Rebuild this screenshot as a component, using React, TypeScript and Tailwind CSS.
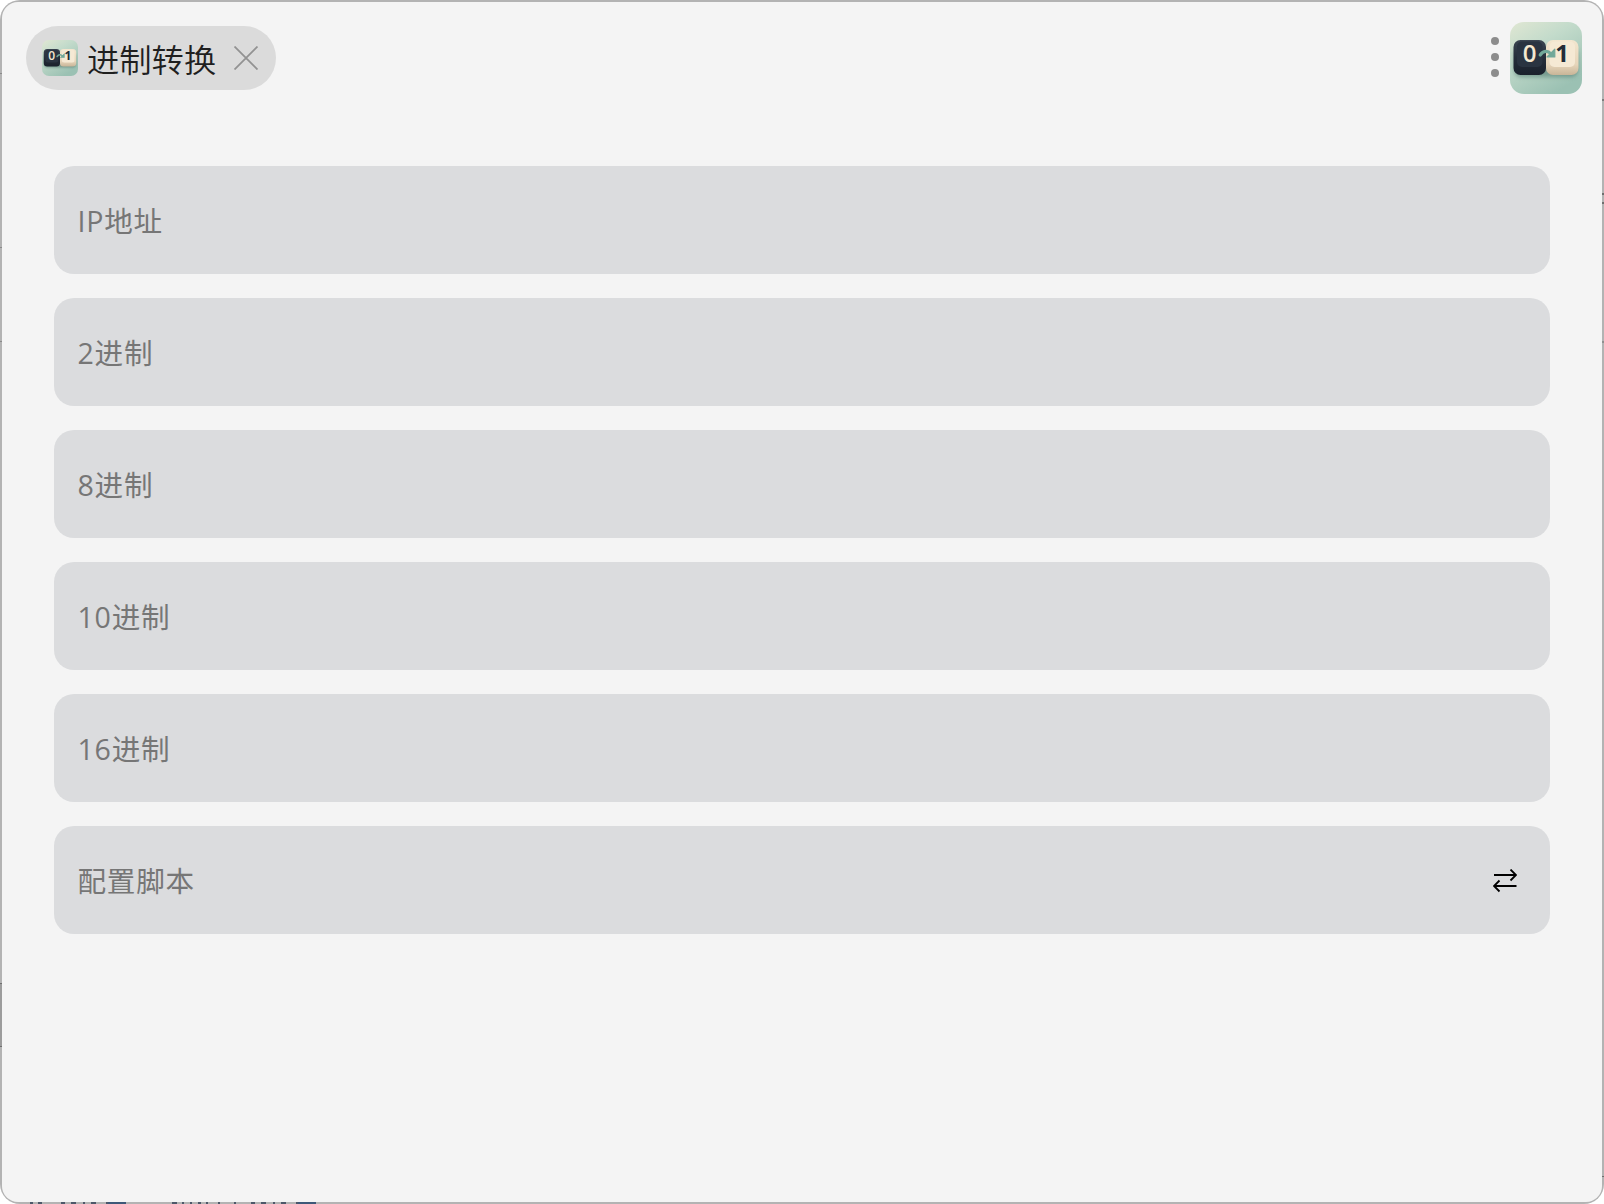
import React, { useState } from 'react';

const fields = ['IP地址', '2进制', '8进制', '10进制', '16进制', '配置脚本'];

function Logo({ id, className }: { id: string; className: string }) {
  return (
    <svg viewBox="0 0 72 72" className={className}>
      <defs>
        <linearGradient id={`${id}-bg`} x1="0" y1="0" x2="0.6" y2="1">
          <stop offset="0" stopColor="#e0e7d3" />
          <stop offset="0.4" stopColor="#c3dbcb" />
          <stop offset="1" stopColor="#9bc1b3" />
        </linearGradient>
        <linearGradient id={`${id}-dark`} x1="0" y1="0" x2="0" y2="1">
          <stop offset="0" stopColor="#3b4551" />
          <stop offset="0.5" stopColor="#252e3a" />
          <stop offset="1" stopColor="#1a212c" />
        </linearGradient>
        <linearGradient id={`${id}-light`} x1="0" y1="0" x2="0" y2="1">
          <stop offset="0" stopColor="#f3e6cf" />
          <stop offset="0.7" stopColor="#e6d5ba" />
          <stop offset="1" stopColor="#c9b598" />
        </linearGradient>
        <filter id={`${id}-blur`} x="-20%" y="-20%" width="140%" height="150%">
          <feGaussianBlur stdDeviation="2" />
        </filter>
      </defs>
      <rect width="72" height="72" rx="14" fill={`url(#${id}-bg)`} />
      <rect x="4" y="25" width="64" height="30" rx="7" fill="#3f6960" opacity="0.5" filter={`url(#${id}-blur)`} />
      <rect x="3.5" y="18" width="32.5" height="35" rx="7" fill={`url(#${id}-dark)`} />
      <rect x="7" y="19.5" width="25.5" height="25.5" rx="5" fill="#2a3441" />
      <rect x="36" y="18" width="32.5" height="35" rx="7" fill={`url(#${id}-light)`} />
      <rect x="39.5" y="19.5" width="25.5" height="25.5" rx="5" fill="#f5e9d4" />
      <text x="19.5" y="39.8" textAnchor="middle" fontSize="24" fontWeight="600" fill="#f5e8d0" className="font-['Open_Sans',sans-serif]">0</text>
      <text x="52" y="40" textAnchor="middle" fontSize="24" fontWeight="700" fill="#232c38" className="font-['Open_Sans',sans-serif]">1</text>
      <path d="M30.2 33c3-4.300 7.300-4.800 11-1" fill="none" stroke="#72a899" strokeWidth="3.2" strokeLinecap="round" />
      <path d="M44.8 27.200v7.800h-7.800z" fill="#72a899" stroke="#72a899" strokeWidth="1.2" strokeLinejoin="round" />
    </svg>
  );
}

// Bits of the windows behind that show through the thin outer edge
function EdgeMarks() {
  return (
    <>
      <div className="absolute top-[73px] left-0 h-px w-0.5 bg-[#8a8a8a]" />
      <div className="absolute top-[247px] left-0 h-px w-0.5 bg-[#8a8a8a]" />
      <div className="absolute top-[341px] left-0 h-px w-0.5 bg-[#8a8a8a]" />
      <div className="absolute top-[983px] left-0 h-16 w-0.5 border-y border-[#6e6e6e] bg-[#9c9c9c]" />
      <div className="absolute top-[99px] right-0 h-0.5 w-0.5 bg-[#7c7c7c]" />
      <div className="absolute top-[193px] right-0 h-0.5 w-0.5 bg-[#6e6e6e]" />
      <div className="absolute top-[202px] right-0 h-0.5 w-0.5 bg-[#6e6e6e]" />
      <div className="absolute top-[341px] right-0 h-0.5 w-0.5 bg-[#909090]" />
      <div className="absolute right-0 bottom-[27px] h-px w-0.5 bg-[#6e6e6e]" />
      <svg viewBox="0 0 290 2" className="absolute bottom-0 left-[30px] h-0.5 w-[290px]" fill="none" stroke="#4d5869" strokeWidth="2">
        <path d="M0 1h3M8 1h4M31 1h4M41 1h5M53 1h2M61 1h5M76 1h2M142 1h5M152 1h2M160 1h2M168 1h3M176 1h2M188 1h2M204 1h2M221 1h4M231 1h5M243 1h2M251 1h5M266 1h2" />
        <path d="M78 1h18M268 1h18" stroke="#3d5878" />
      </svg>
    </>
  );
}

export default function App() {
  const [values, setValues] = useState<string[]>(fields.map(() => ''));

  const handleChange = (index: number, value: string) => {
    setValues(prev => prev.map((v, i) => (i === index ? value : v)));
  };

  return (
    <div className="relative h-screen w-screen overflow-hidden bg-white font-['Open_Sans','Noto_Sans_CJK_SC',sans-serif]">
      <div className="h-full rounded-[20px] bg-[#b3b3b3] p-0.5">
        <div className="flex h-full flex-col rounded-2xl bg-[#f4f4f4]">
          {/* Title bar */}
          <header className="flex items-start justify-between pt-5 pr-5 pl-6">
            <div className="mt-1 flex h-16 w-[250px] items-center rounded-full bg-[#dbdbdb] pl-4">
              <Logo id="tab" className="size-9 shrink-0" />
              <span className="ml-[9px] w-32 text-[32.3px] leading-none whitespace-nowrap text-[#1f1f1f] font-['Noto_Sans_CJK_SC',sans-serif] font-[350]">进制转换</span>
              <svg viewBox="0 0 24 24" className="ml-[19px] size-6 shrink-0" fill="none" stroke="#929292" strokeWidth="1.8">
                <path d="M.5.5l23 23M23.5.5l-23 23" />
              </svg>
            </div>
            <div className="flex items-center gap-[11px]">
              <div className="mb-0.5 flex flex-col gap-2">
                <span className="size-2 rounded-full bg-[#8c8c8c]" />
                <span className="size-2 rounded-full bg-[#8c8c8c]" />
                <span className="size-2 rounded-full bg-[#8c8c8c]" />
              </div>
              <Logo id="app" className="size-[72px]" />
            </div>
          </header>

          {/* Conversion fields */}
          <main className="flex flex-col gap-6 px-[52px] pt-[72px]">
            {fields.map((label, index) => (
              <div key={label} className="flex h-[108px] items-center rounded-[20px] bg-[#dbdcde] pr-[33px] pl-[23.5px]">
                <input
                  value={values[index]}
                  onChange={e => handleChange(index, e.target.value)}
                  placeholder={label}
                  className="h-full min-w-0 flex-1 bg-transparent text-[28.6px] tracking-[0.75px] outline-none placeholder:text-[#767676]"
                />
                {index === fields.length - 1 && (
                  <button aria-label="swap" className="mt-0.5">
                    <svg viewBox="0 0 24 24" className="size-6" fill="none" stroke="#000" strokeWidth="1.8">
                      <path d="M1 6h22M17.5.5L23 6l-5.500 5.500M23.500 17H1M6.500 11.500L1 17l5.500 5.500" />
                    </svg>
                  </button>
                )}
              </div>
            ))}
          </main>
        </div>
      </div>
      <EdgeMarks />
    </div>
  );
}
